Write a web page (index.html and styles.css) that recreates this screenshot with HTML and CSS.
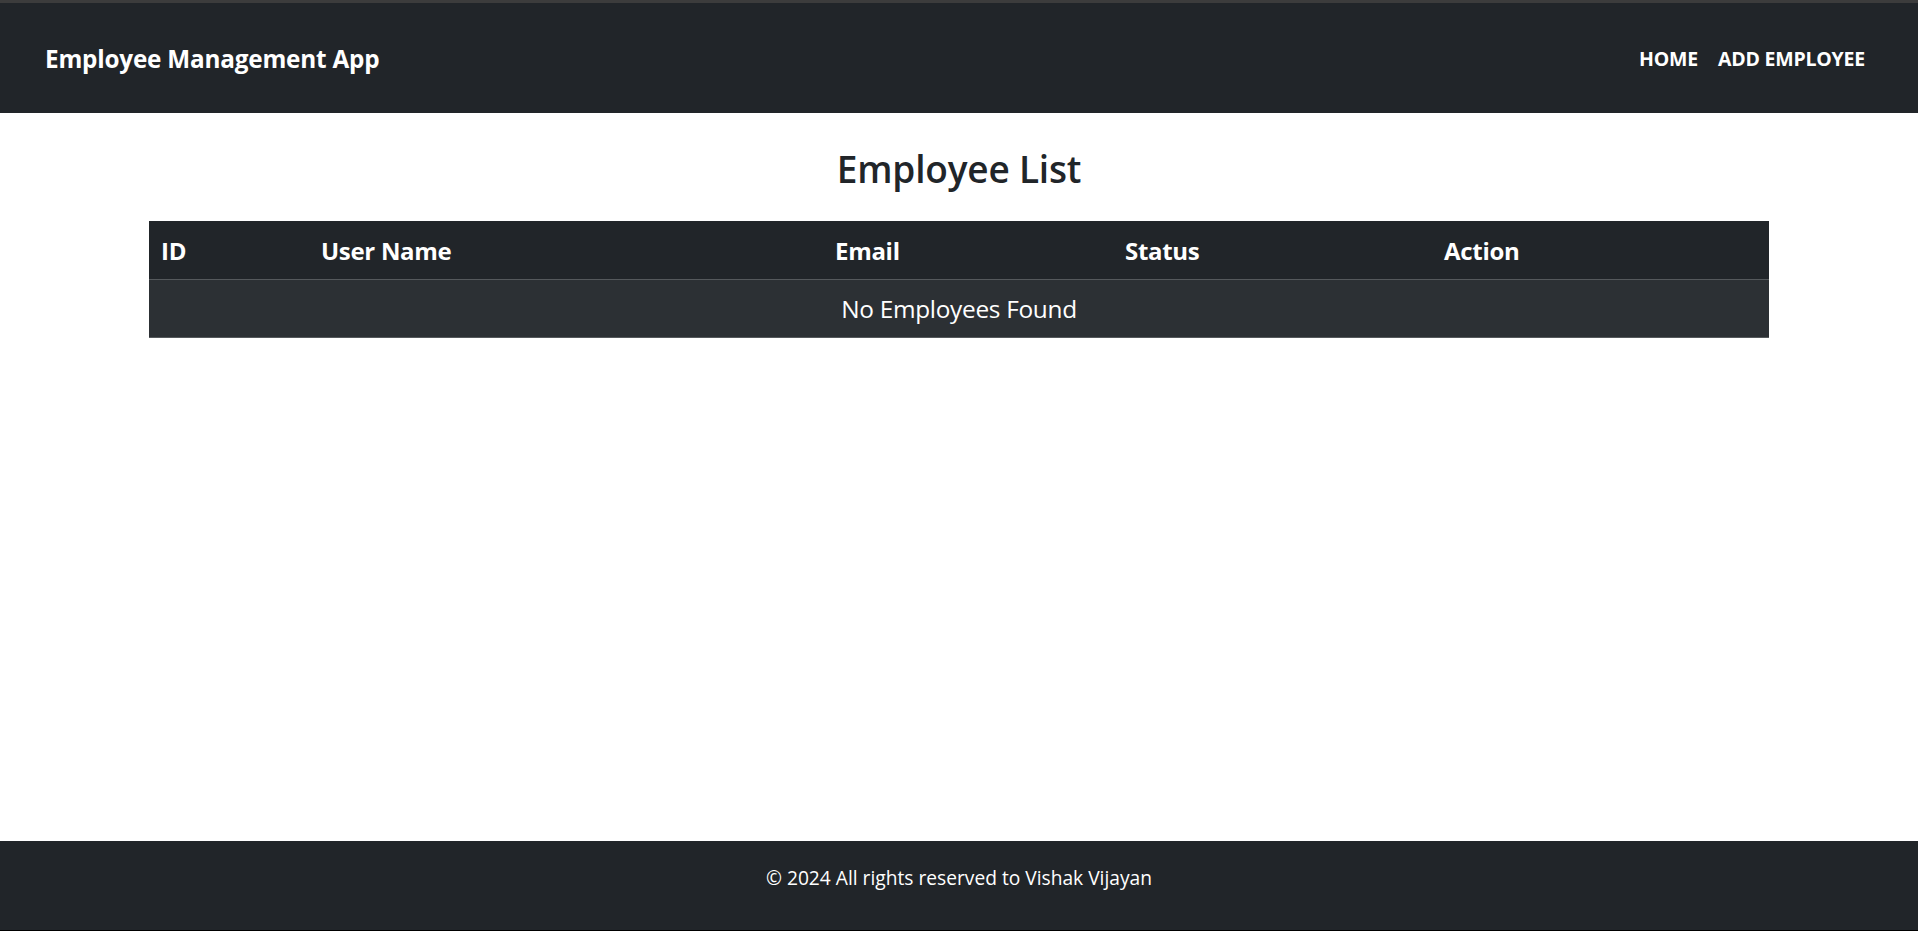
FILE: index.html
```html
<!DOCTYPE html>
<html lang="en">
<head>
<meta charset="utf-8">
<title>Employee Management App</title>
<link rel="stylesheet" href="styles.css">
</head>
<body>
<div class="page">
  <header class="navbar">
    <a class="brand" href="#">Employee Management App</a>
    <nav class="nav">
      <a class="nav-link" href="#">HOME</a>
      <a class="nav-link" href="#">ADD EMPLOYEE</a>
    </nav>
  </header>
  <main class="main">
    <h2 class="title">Employee List</h2>
    <table class="emp-table">
      <colgroup>
        <col class="c-id"><col class="c-name"><col class="c-email"><col class="c-status"><col class="c-action">
      </colgroup>
      <thead>
        <tr><th>ID</th><th>User Name</th><th>Email</th><th>Status</th><th>Action</th></tr>
      </thead>
      <tbody>
        <tr><td colspan="5" class="empty">No Employees Found</td></tr>
      </tbody>
    </table>
  </main>
  <footer class="footer">© 2024 All rights reserved to Vishak Vijayan</footer>
</div>
</body>
</html>
```
FILE: styles.css
```css
* { box-sizing: border-box; }
html, body { margin: 0; padding: 0; }
body {
  font-family: "Open Sans", "Noto Sans", sans-serif;
  color: #212529;
  background: #fff;
}
.page {
  min-height: 100vh;
  display: flex;
  flex-direction: column;
}
.navbar {
  height: 113px;
  border-top: 3px solid #3c3c3c;
  background: #212529;
  display: flex;
  align-items: center;
  justify-content: space-between;
  padding: 0 53px 0 45px;
}
.brand {
  color: #fff;
  text-decoration: none;
  font-weight: 700;
  font-size: 24.3px;
  letter-spacing: -0.2px;
}
.nav {
  display: flex;
  gap: 20px;
}
.nav-link {
  color: #fff;
  text-decoration: none;
  font-weight: 700;
  font-size: 19.5px;
  letter-spacing: -0.2px;
}
.main {
  flex: 1;
  padding-top: 34px;
}
.title {
  margin: 0 0 30px;
  text-align: center;
  font-size: 37px;
  font-weight: 600;
  line-height: 1.2;
  letter-spacing: -0.2px;
  color: #212529;
}
.emp-table {
  width: 1620px;
  margin: 0 auto;
  border-collapse: collapse;
  table-layout: fixed;
  color: #fff;
}
.c-id { width: 160px; }
.c-name { width: 514px; }
.c-email { width: 290px; }
.c-status { width: 319px; }
.c-action { width: 337px; }
.emp-table th {
  background: #212529;
  text-align: left;
  font-weight: 700;
  font-size: 24px;
  letter-spacing: -0.3px;
  height: 58px;
  padding: 0 12px;
  border-bottom: 1px solid #55595c;
}
.emp-table td {
  background: #2c3034;
  height: 58px;
  padding: 0 12px;
  font-size: 24.4px;
  letter-spacing: -0.3px;
  border-bottom: 1px solid #55595c;
}
.emp-table td.empty { text-align: center; }
.footer {
  height: 90px;
  background: #212529;
  border-bottom: 1px solid #000;
  color: #fff;
  font-size: 19.2px;
  display: flex;
  align-items: center;
  justify-content: center;
  padding-bottom: 16px;
}
```
